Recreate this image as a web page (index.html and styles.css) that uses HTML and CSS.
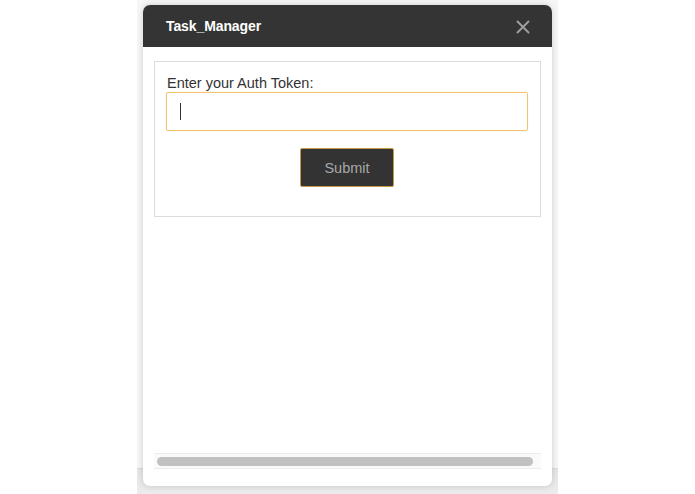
FILE: index.html
```html
<!DOCTYPE html>
<html lang="en">
<head>
<meta charset="utf-8">
<title>Task_Manager</title>
<link rel="stylesheet" href="styles.css">
</head>
<body>
<div class="backdrop">
  <div class="window">
    <div class="header">
      <span class="title">Task_Manager</span>
      <svg class="close" width="14" height="14" viewBox="0 0 14 14" aria-label="Close">
        <path d="M1.5 1.5 L12.5 12.5 M12.5 1.5 L1.5 12.5" stroke="#a0a0a0" stroke-width="1.9" stroke-linecap="round" fill="none"/>
      </svg>
    </div>
    <div class="content">
      <div class="card">
        <label class="label" for="token">Enter your Auth Token:</label>
        <div class="field">
          <span class="caret"></span>
          <input id="token" class="input" type="text">
        </div>
        <div class="actions">
          <button class="submit" type="button">Submit</button>
        </div>
      </div>
      <div class="spacer"></div>
      <div class="hscroll"><div class="thumb"></div></div>
    </div>
  </div>
</div>
</body>
</html>
```

FILE: styles.css
```css
html, body {
  margin: 0;
  padding: 0;
  background: #ffffff;
  font-family: "Liberation Sans", Arial, sans-serif;
}

.backdrop {
  margin-left: 137px;
  width: 421px;
  height: 494px;
  box-sizing: border-box;
  padding: 5px 6px 0;
  background: linear-gradient(to bottom,
    #f6f6f6 0, #f6f6f6 468px,
    #d9d9d9 468px, #e6e6e6 470px, #ececec 100%);
}

.window {
  width: 409px;
  height: 481px;
  background: #ffffff;
  border-radius: 7px;
  box-shadow: 0 0 6px rgba(0, 0, 0, 0.16);
  overflow: hidden;
  display: flex;
  flex-direction: column;
}

.header {
  height: 42px;
  flex: none;
  background: #343434;
  display: flex;
  align-items: center;
  justify-content: space-between;
  padding: 0 22px 0 23px;
}

.title {
  color: #ffffff;
  font-weight: bold;
  font-size: 14px;
  letter-spacing: -0.1px;
}

.close {
  display: block;
  margin-top: 1px;
}

.content {
  flex: 1;
  display: flex;
  flex-direction: column;
  padding: 14px 11px 17px;
}

.card {
  border: 1px solid #dcdcdc;
  padding: 12px 12px 29px 11px;
  display: flex;
  flex-direction: column;
}

.label {
  display: block;
  font-size: 14.5px;
  line-height: 18px;
  color: #333333;
  padding-left: 1px;
}

.field {
  height: 39px;
  box-sizing: border-box;
  border: 1px solid #f1c36c;
  border-radius: 2px;
  display: flex;
  align-items: center;
  padding-left: 13px;
  box-shadow: 0 0 1px rgba(240, 190, 100, 0.5);
}

.caret {
  width: 1px;
  height: 17px;
  background: #333333;
  flex: none;
}

.input {
  flex: 1;
  border: 0;
  outline: none;
  background: transparent;
  font-family: inherit;
  font-size: 14px;
  padding: 0;
  height: 100%;
}

.actions {
  display: flex;
  justify-content: center;
  margin-top: 17px;
}

.submit {
  width: 94px;
  height: 39px;
  background: #333333;
  border: 1px solid #c49b48;
  border-radius: 2px;
  color: #a8a8a8;
  font-family: inherit;
  font-size: 14.5px;
  padding: 0;
  cursor: pointer;
}

.spacer {
  flex: 1;
}

.hscroll {
  height: 16px;
  box-sizing: border-box;
  border-top: 1px solid #ececec;
  border-bottom: 1px solid #ececec;
  background: #fafafa;
  padding: 3px 8px 0 3px;
}

.thumb {
  height: 9px;
  border-radius: 5px;
  background: #c1c1c1;
}
```
